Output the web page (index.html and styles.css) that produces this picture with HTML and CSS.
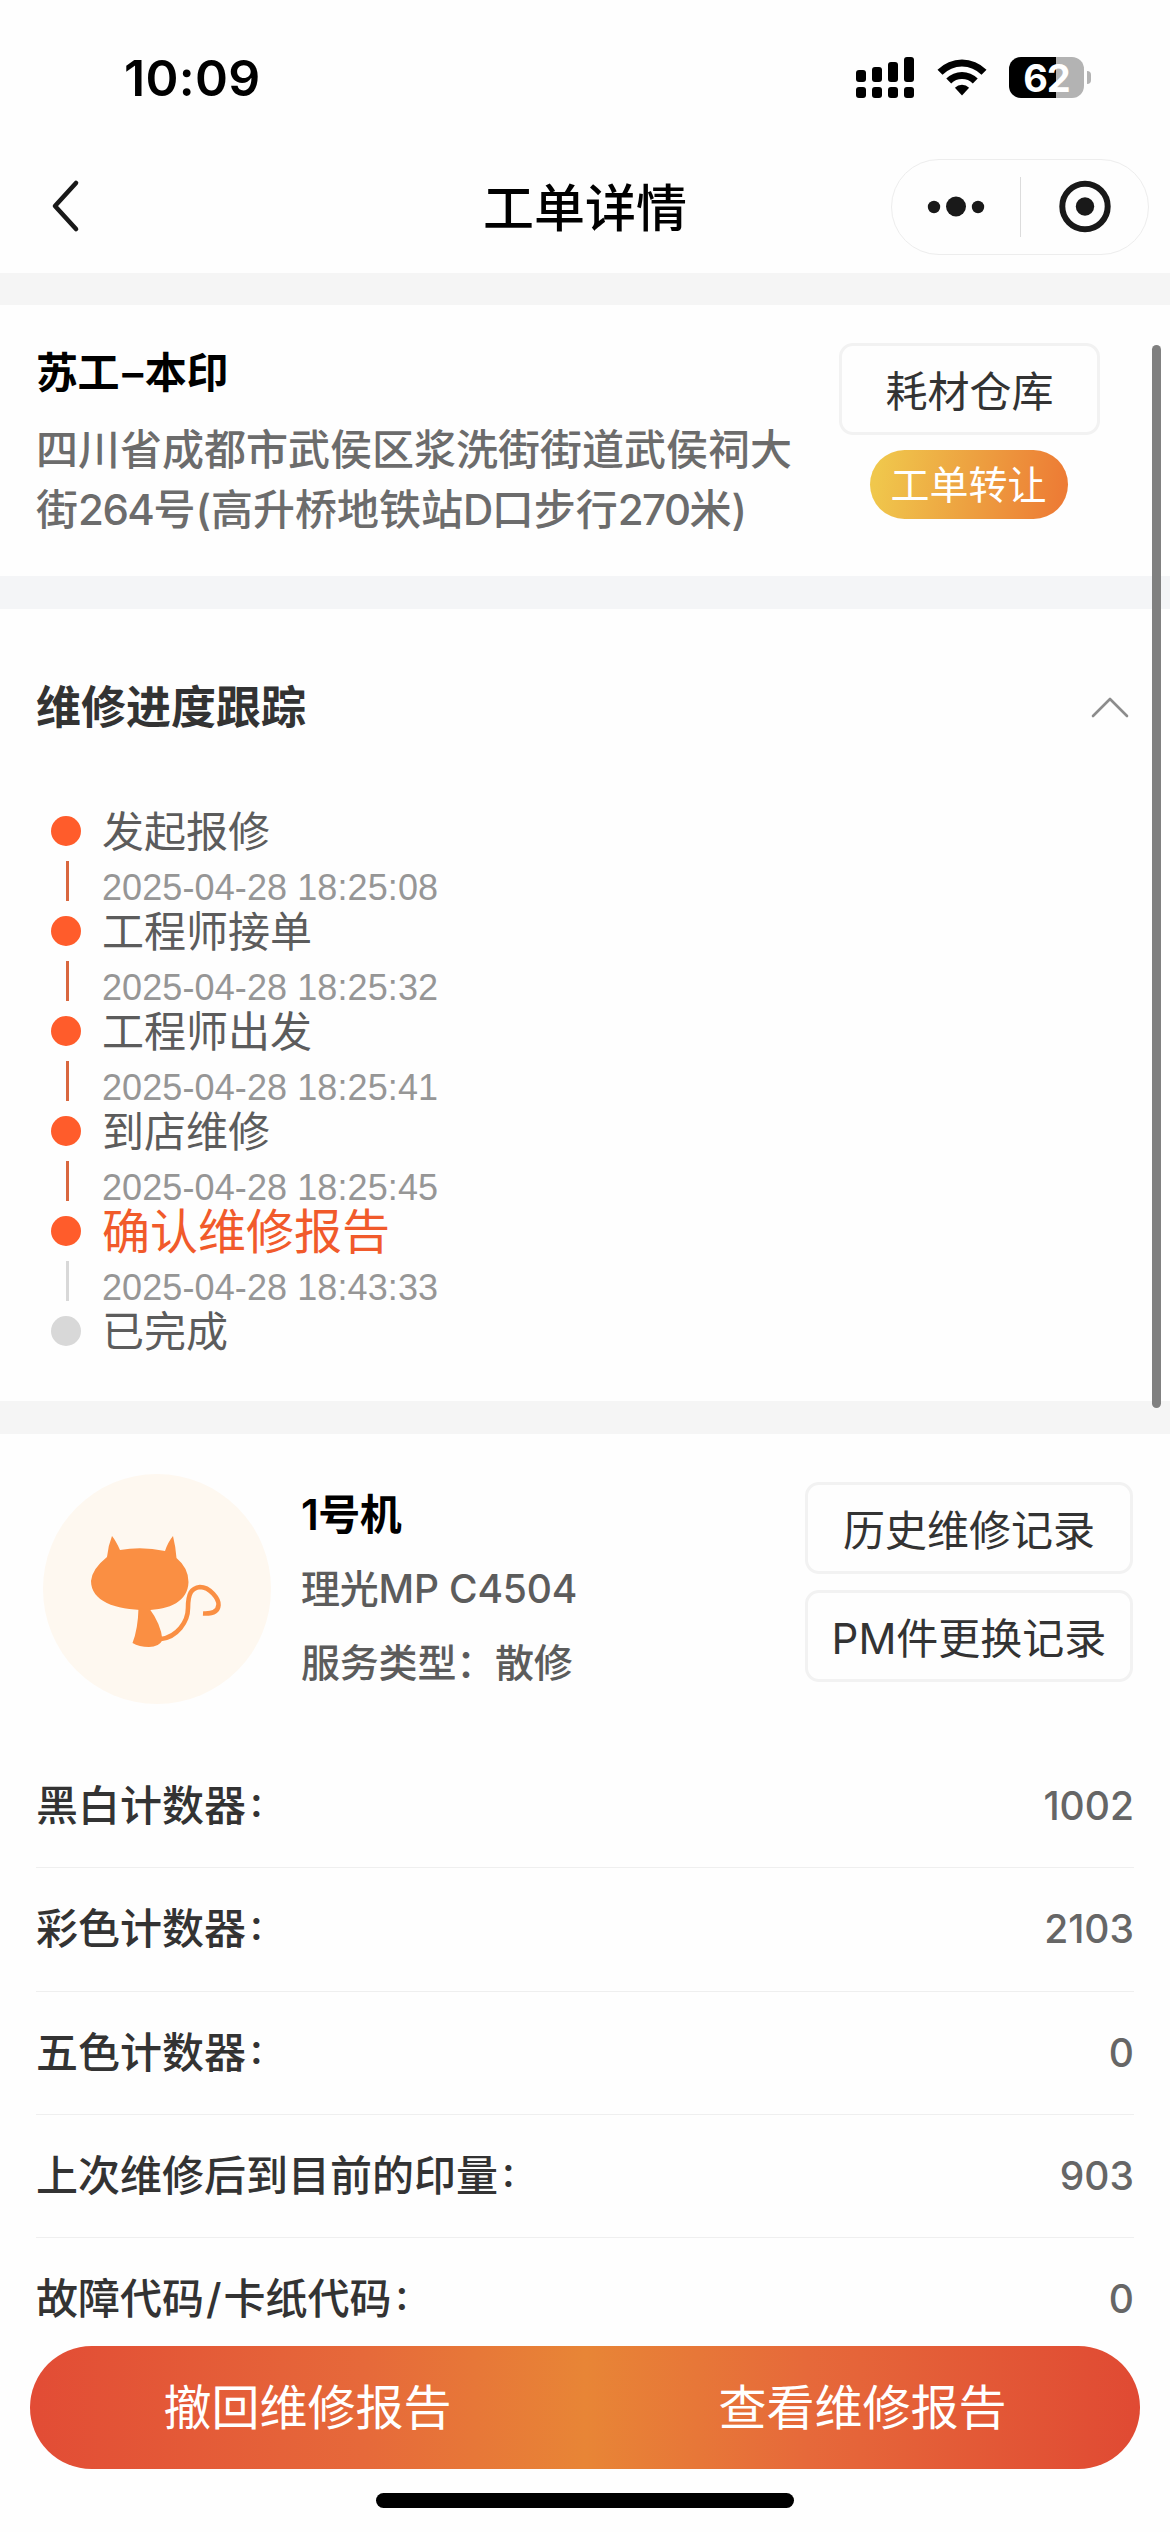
FILE: index.html
```html
<!DOCTYPE html>
<html lang="zh-CN">
<head>
<meta charset="utf-8">
<title>工单详情</title>
<link rel="stylesheet" href="styles.css">
</head>
<body>
<div class="phone">
  <header class="status-bar">
    <div class="clock">10:09</div>
    <div class="indicators">
      <svg class="signal" width="58" height="41" viewBox="0 0 58 41">
        <rect x="0" y="13" width="10" height="12" rx="3"/><rect x="16" y="10" width="10" height="15" rx="3"/>
        <rect x="32" y="5" width="10" height="20" rx="3"/><rect x="48" y="0" width="10" height="25" rx="3"/>
        <rect x="0" y="30" width="10" height="11" rx="3"/><rect x="16" y="30" width="10" height="11" rx="3"/>
        <rect x="32" y="30" width="10" height="11" rx="3"/><rect x="48" y="30" width="10" height="11" rx="3"/>
      </svg>
      <svg class="wifi" width="50" height="41" viewBox="0 0 50 41">
        <path d="M0.5 12.7A34.5 34.5 0 0 1 49.5 12.7L44.5 17.7A27.5 27.5 0 0 0 5.5 17.7Z"/>
        <path d="M9.3 21.5A22.2 22.2 0 0 1 40.7 21.5L35.8 26.4A15.3 15.3 0 0 0 14.2 26.4Z"/>
        <path d="M17.9 30.7A10.2 10.2 0 0 1 32.1 30.7L25 38.5Z"/>
      </svg>
      <div class="battery"><div class="battery-cell">62</div><div class="battery-tip"></div></div>
    </div>
  </header>

  <nav class="nav-bar">
    <svg class="back" width="30" height="54" viewBox="0 0 30 54"><path d="M26 4L5 27L26 50" fill="none" stroke="#191919" stroke-width="4.6" stroke-linecap="round" stroke-linejoin="round"/></svg>
    <h1 class="nav-title">工单详情</h1>
    <div class="capsule">
      <svg width="128" height="94" viewBox="0 0 128 94" fill="#191919"><circle cx="42" cy="47" r="6.2"/><circle cx="64" cy="46.5" r="10"/><circle cx="86" cy="47" r="6.2"/></svg>
      <i class="capsule-line"></i>
      <svg width="127" height="94" viewBox="0 0 127 94"><circle cx="64" cy="46.5" r="22.7" fill="none" stroke="#191919" stroke-width="6"/><circle cx="64" cy="46.5" r="9.2" fill="#191919"/></svg>
    </div>
  </nav>

  <main class="content">
    <section class="card customer">
      <div class="customer-info">
        <h2 class="customer-name">苏工<span class="dash">–</span>本印</h2>
        <p class="address">四川省成都市武侯区浆洗街街道武侯祠大街<span class="tight">264</span>号(高升桥地铁站<span class="tight">D</span>口步行<span class="tight">270</span>米)</p>
      </div>
      <div class="customer-actions">
        <button class="outline-btn narrow">耗材仓库</button>
        <button class="transfer-btn">工单转让</button>
      </div>
    </section>

    <section class="card progress">
      <div class="progress-head">
        <h2 class="progress-title">维修进度跟踪</h2>
        <svg width="40" height="24" viewBox="0 0 40 24"><path d="M3 21L20 4L37 21" fill="none" stroke="#8c8c8c" stroke-width="2.6" stroke-linecap="round" stroke-linejoin="round"/></svg>
      </div>
      <ol class="timeline">
        <li class="step done"><div class="rail"><i class="dot"></i><i class="line"></i></div><div class="step-text"><span class="step-name">发起报修</span><time>2025-04-28 18:25:08</time></div></li>
        <li class="step done"><div class="rail"><i class="dot"></i><i class="line"></i></div><div class="step-text"><span class="step-name">工程师接单</span><time>2025-04-28 18:25:32</time></div></li>
        <li class="step done"><div class="rail"><i class="dot"></i><i class="line"></i></div><div class="step-text"><span class="step-name">工程师出发</span><time>2025-04-28 18:25:41</time></div></li>
        <li class="step done"><div class="rail"><i class="dot"></i><i class="line"></i></div><div class="step-text"><span class="step-name">到店维修</span><time>2025-04-28 18:25:45</time></div></li>
        <li class="step current"><div class="rail"><i class="dot"></i><i class="line"></i></div><div class="step-text"><span class="step-name">确认维修报告</span><time>2025-04-28 18:43:33</time></div></li>
        <li class="step"><div class="rail"><i class="dot"></i></div><div class="step-text"><span class="step-name">已完成</span></div></li>
      </ol>
    </section>

    <section class="card device">
      <div class="device-head">
        <svg class="avatar" width="228" height="230" viewBox="43 1474 228 230">
          <ellipse cx="157" cy="1589" rx="114" ry="115" fill="#fef8f0"/>
          <g fill="#fa8f43">
            <path d="M112 1536Q116 1541 120 1550Q142 1546 165 1551Q168 1542 173 1536Q175.500 1546 176.500 1558Q188.500 1568 188.500 1582C188 1601 170 1610 146 1610C115 1610 91 1601 91 1581Q92 1569 107 1557Q108 1546 112 1536Z"/>
            <path d="M138.500 1608H149Q161 1624 162.500 1640Q159 1647 149 1647Q139 1647 132.500 1643Q138 1629 138.500 1608Z"/>
          </g>
          <path d="M161 1639C177 1637 188 1622 188 1608C188 1594 191 1588 200 1587C210 1587 219 1599 218.500 1605C218 1612 212 1614 203 1613.500" fill="none" stroke="#fa8f43" stroke-width="4.600"/>
        </svg>
        <div class="device-info">
          <h2 class="device-name">1号机</h2>
          <p>理光MP C4504</p>
          <p>服务类型：散修</p>
        </div>
        <div class="device-actions">
          <button class="outline-btn">历史维修记录</button>
          <button class="outline-btn">PM件更换记录</button>
        </div>
      </div>
      <dl class="counters">
        <div class="row"><dt>黑白计数器<span class="colon">:</span></dt><dd>1002</dd></div>
        <div class="row"><dt>彩色计数器<span class="colon">:</span></dt><dd>2103</dd></div>
        <div class="row"><dt>五色计数器<span class="colon">:</span></dt><dd>0</dd></div>
        <div class="row"><dt>上次维修后到目前的印量<span class="colon">:</span></dt><dd>903</dd></div>
        <div class="row"><dt>故障代码<span class="slash">/</span>卡纸代码<span class="colon">:</span></dt><dd>0</dd></div>
      </dl>
    </section>
    <div class="scrollbar"></div>
  </main>

  <footer class="footer">
    <div class="action-bar"><button>撤回维修报告</button><button>查看维修报告</button></div>
    <div class="home-indicator"></div>
  </footer>
</div>
</body>
</html>
```
FILE: styles.css
```css
* { box-sizing: border-box; margin: 0; padding: 0; }
body { background: #fefefe; font-family: Inter, "Noto Sans CJK SC", sans-serif; color: #333; }
button { border: 0; background: none; font: inherit; color: inherit; white-space: nowrap; }
.phone { position: relative; width: 1170px; height: 2532px; display: flex; flex-direction: column; overflow: hidden; background: #fefefe; }

.status-bar { height: 155px; padding: 0 79px 0 124px; display: flex; justify-content: space-between; }
.clock { margin-top: 46px; height: 64px; line-height: 64px; font-size: 50px; font-weight: 600; color: #000; letter-spacing: 0.3px; }
.indicators { margin-top: 57px; height: 41px; display: flex; }
.signal { margin-right: 23px; }
.wifi { margin-right: 22px; }
.battery { display: flex; align-items: center; gap: 3px; }
.battery-cell { width: 75px; height: 41px; border-radius: 12px; background: linear-gradient(90deg, #000 47px, #b3b3b3 47px); color: #fff; font-size: 38px; line-height: 42px; font-weight: 700; text-align: center; letter-spacing: -1px; }
.battery-tip { width: 4px; height: 13px; border-radius: 0 5px 5px 0; background: #b3b3b3; }

.nav-bar { height: 118px; padding: 4px 21px 0 50px; display: grid; grid-template-columns: 258px 1fr 258px; }
.back { margin-top: 20px; }
.nav-title { text-align: center; font-size: 51px; line-height: 99px; height: 96px; font-weight: 500; color: #000; margin-left: -29px; }
.capsule { width: 258px; height: 96px; border: 1px solid #ededed; border-radius: 48px; display: flex; align-items: center; }
.capsule-line { width: 1px; height: 60px; background: #dcdcdc; }

.content { position: relative; flex: 1; min-height: 0; overflow: hidden; display: flex; flex-direction: column; gap: 33px; padding-top: 32px; background: #f5f5f5; }
.card { background: #fefefe; flex-shrink: 0; }

.customer { height: 271px; padding: 38px 70px 0 36px; display: flex; justify-content: space-between; box-shadow: 0 33px #f4f5f7; }
.customer-info { width: 757px; }
.customer-name { font-size: 42px; line-height: 60px; font-weight: 600; color: #000; letter-spacing: -0.4px; }
.dash { padding: 0 2px 0 3px; }
.address { margin-top: 17px; font-size: 42px; line-height: 60px; font-weight: 500; color: #6c6c6c; }
.tight { letter-spacing: -1.5px; }
.customer-actions { display: flex; flex-direction: column; align-items: center; gap: 15px; }
.outline-btn { width: 328px; height: 92px; border: 3px solid #f2f2f2; border-radius: 14px; padding-top: 5px; font-size: 42px; line-height: 80px; font-weight: 400; }
.outline-btn.narrow { width: 261px; }
.transfer-btn { width: 198px; height: 69px; border-radius: 35px; background: linear-gradient(100deg, #f0c74c 5%, #eda341 48%, #ed7c35 95%); color: #fff; font-size: 39px; line-height: 67px; font-weight: 400; margin-right: 2px; }

.progress { height: 792px; padding: 68px 40px 0 36px; }
.progress-head { display: flex; justify-content: space-between; align-items: center; height: 60px; }
.progress-title { font-size: 45px; line-height: 60px; font-weight: 700; padding-top: 2px; }
.timeline { list-style: none; margin-top: 64px; padding-left: 15px; }
.step { height: 100px; display: flex; }
.rail { width: 51px; padding-top: 15px; }
.dot { display: block; width: 30px; height: 30px; border-radius: 50%; background: #d8d8d8; }
.line { display: block; width: 3px; height: 40px; margin: 15px 0 0 15px; background: #d8d8d8; }
.done .dot, .current .dot { background: #ff5c2b; }
.done .line { background: #d9673f; }
.step-text { display: flex; flex-direction: column; }
.step-name { font-size: 42px; line-height: 62px; height: 60px; font-weight: 400; color: #5c5c5c; }
.current .step-name { font-size: 48px; color: #f15a2b; }
time { font-family: "Liberation Sans", Arial, sans-serif; font-size: 36px; line-height: 54px; height: 40px; color: #969696; letter-spacing: 0.1px; white-space: nowrap; }

.device { height: 950px; padding: 0 36px; }
.device-head { height: 311px; padding: 40px 1px 0 7px; display: flex; }
.device-info { flex: 1; padding: 4px 0 0 30px; font-size: 39px; line-height: 74px; font-weight: 500; color: #5c5c5c; letter-spacing: -0.2px; }
.device-name { font-size: 42px; line-height: 74px; font-weight: 600; color: #000; letter-spacing: -0.5px; }
.device-actions { padding-top: 8px; display: flex; flex-direction: column; gap: 16px; }
.row { height: 123.300px; display: flex; justify-content: space-between; align-items: center; border-bottom: 1px solid #efefef; }
dt { font-size: 42px; line-height: 60px; font-weight: 500; }
.colon { font-feature-settings: "case"; margin-left: 4px; }
.slash { padding: 0 2px; }
dd { font-size: 39px; line-height: 60px; font-weight: 500; color: #666; }
.scrollbar { position: absolute; left: 1152px; top: 72px; width: 9px; height: 1063px; border-radius: 5px; background: #808080; }

.footer { height: 186px; display: flex; flex-direction: column; align-items: center; gap: 24px; background: #fefefe; }
.action-bar { width: 1110px; height: 123px; border-radius: 62px; display: grid; grid-template-columns: 1fr 1fr; background: linear-gradient(90deg, #e24c35, #e6693a 30%, #e88536 50%, #e6693a 70%, #e04a33); }
.action-bar button { font-size: 48px; font-weight: 400; color: #fff; line-height: 120px; }
.home-indicator { width: 418px; height: 15px; border-radius: 8px; background: #000; }
```
